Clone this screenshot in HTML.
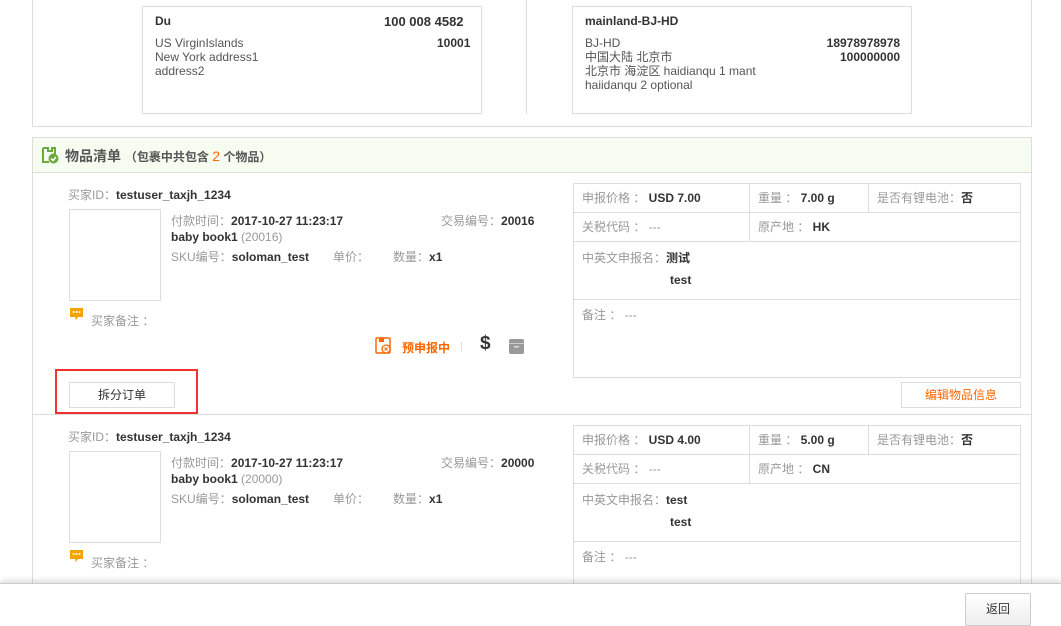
<!DOCTYPE html>
<html><head><meta charset="utf-8">
<style>
*{margin:0;padding:0;box-sizing:border-box}
html,body{width:1061px;height:626px;overflow:hidden}
body{background:#fff;font-family:"Liberation Sans","Noto Sans CJK SC",sans-serif;font-size:12px;color:#333;position:relative}
.a{position:absolute;white-space:nowrap}
.g{color:#999}
.b{font-weight:bold;color:#333}
.box{position:absolute;border:1px solid #ddd}
.cell{position:absolute;border:1px solid #ddd;padding-left:8px;color:#999}
</style></head><body>
<div class="box" style="left:32px;top:-2px;width:1000px;height:129px"></div>
<div class="a" style="left:526px;top:0;width:1px;height:114px;background:#ddd"></div>
<div class="box" style="left:142px;top:6px;width:340px;height:108px"></div>
<div class="a b" style="left:155px;top:14px">Du</div>
<div class="a b" style="left:384px;top:14px;font-size:13px">100 008 4582</div>
<div class="a" style="left:155px;top:36px;color:#555;line-height:14px">US VirginIslands<br>New York address1<br>address2</div>
<div class="a b" style="left:437px;top:36px">10001</div>
<div class="box" style="left:572px;top:6px;width:340px;height:108px"></div>
<div class="a b" style="left:585px;top:14px">mainland-BJ-HD</div>
<div class="a" style="left:585px;top:36px;color:#555;line-height:14px">BJ-HD<br>中国大陆 北京市<br>北京市 海淀区 haidianqu 1 mant<br>haiidanqu 2 optional</div>
<div class="a b" style="left:826px;top:36px;text-align:right;line-height:14px">18978978978<br><span style="padding-left:14px">100000000</span></div>

<div class="box" style="left:32px;top:137px;width:1000px;height:470px"></div>
<div class="a" style="left:33px;top:138px;width:998px;height:35px;background:#f7fcf1;border-bottom:1px solid #ddd"></div>
<svg class="a" style="left:41px;top:146px" width="18" height="18" viewBox="0 0 18 18"><path d="M2 2h5v3h4V2h3v6" fill="none" stroke="#6aaa3a" stroke-width="2"/><path d="M2 2v14h6" fill="none" stroke="#6aaa3a" stroke-width="2"/><circle cx="12.5" cy="12.5" r="5" fill="#6aaa3a"/><path d="M10 12.5l2 2 3-3.5" fill="none" stroke="#fff" stroke-width="1.5"/></svg>
<div class="a" style="left:65px;top:146px;font-size:14px;font-weight:bold;color:#555">物品清单 <span style="font-size:12px">（包裹中共包含 <span style="color:#f60;font-weight:normal;font-size:14px">2</span> 个物品）</span></div>
<div class="a" style="left:33px;top:414px;width:998px;height:1px;background:#ddd"></div>

<div class="a g" style="left:68px;top:186px">买家ID：<span class="b">testuser_taxjh_1234</span></div>
<div class="box" style="left:69px;top:209px;width:92px;height:92px"></div>
<div class="a g" style="left:171px;top:212px">付款时间：<span class="b">2017-10-27 11:23:17</span></div>
<div class="a g" style="left:441px;top:212px">交易编号：<span class="b">20016</span></div>
<div class="a" style="left:171px;top:230px"><span class="b">baby book1</span> <span class="g">(20016)</span></div>
<div class="a g" style="left:171px;top:248px">SKU编号：<span class="b">soloman_test</span></div>
<div class="a g" style="left:333px;top:248px">单价：</div>
<div class="a g" style="left:393px;top:248px">数量：<span class="b">x1</span></div>
<svg class="a" style="left:69px;top:307px" width="16" height="16" viewBox="0 0 16 16"><path d="M1 1h13v9H9l-2 3-1-3H1z" fill="#f5a300"/><circle cx="4.5" cy="5" r="1" fill="#fff"/><circle cx="7.5" cy="5" r="1" fill="#fff"/><circle cx="10.5" cy="5" r="1" fill="#fff"/></svg>
<div class="a g" style="left:91px;top:312px">买家备注 ：</div>
<svg class="a" style="left:375px;top:337px" width="17" height="18" viewBox="0 0 17 18"><rect x="1" y="1" width="14" height="15" rx="1" fill="none" stroke="#f60" stroke-width="1.5"/><rect x="4" y="1" width="5" height="4" fill="#f60"/><circle cx="11" cy="12" r="4" fill="#fff" stroke="#f60" stroke-width="1.3"/><path d="M9.5 10.5l3 3M12.5 10.5l-3 3" stroke="#f60"/></svg>
<div class="a" style="left:402px;top:339px;color:#f60;font-weight:bold">预申报中</div>
<div class="a" style="left:461px;top:342px;width:1px;height:9px;background:#ddd"></div>
<div class="a" style="left:480px;top:333px;font-size:19px;font-weight:bold;color:#333">$</div>
<svg class="a" style="left:509px;top:339px" width="16" height="15" viewBox="0 0 16 15"><rect x="0" y="0" width="15" height="15" rx="2" fill="#999"/><rect x="0" y="4" width="15" height="1" fill="#ccc"/><rect x="5" y="7" width="5" height="1.5" fill="#ddd"/></svg>
<div class="a" style="left:55px;top:369px;width:143px;height:45px;border:2px solid #f03232"></div>
<div class="box" style="left:69px;top:382px;width:106px;height:26px;text-align:center;line-height:24px;color:#333">拆分订单</div>

<div class="cell" style="left:573px;top:183px;width:177px;height:30px;line-height:28px">申报价格 ： <span class="b">USD 7.00</span></div>
<div class="cell" style="left:749px;top:183px;width:120px;height:30px;line-height:28px">重量 ： <span class="b">7.00 g</span></div>
<div class="cell" style="left:868px;top:183px;width:153px;height:30px;line-height:28px">是否有锂电池：<span class="b">否</span></div>
<div class="cell" style="left:573px;top:212px;width:177px;height:30px;line-height:28px">关税代码 ： ---</div>
<div class="cell" style="left:749px;top:212px;width:272px;height:30px;line-height:28px">原产地 ： <span class="b">HK</span></div>
<div class="cell" style="left:573px;top:241px;width:448px;height:59px;padding-top:5px;line-height:22px">中英文申报名：<span class="b">测试</span><br><span class="b" style="padding-left:88px">test</span></div>
<div class="cell" style="left:573px;top:299px;width:448px;height:79px;padding-top:6px">备注 ： ---</div>
<div class="box" style="left:901px;top:382px;width:120px;height:26px;text-align:center;line-height:24px;color:#f60">编辑物品信息</div>

<div class="a g" style="left:68px;top:428px">买家ID：<span class="b">testuser_taxjh_1234</span></div>
<div class="box" style="left:69px;top:451px;width:92px;height:92px"></div>
<div class="a g" style="left:171px;top:454px">付款时间：<span class="b">2017-10-27 11:23:17</span></div>
<div class="a g" style="left:441px;top:454px">交易编号：<span class="b">20000</span></div>
<div class="a" style="left:171px;top:472px"><span class="b">baby book1</span> <span class="g">(20000)</span></div>
<div class="a g" style="left:171px;top:490px">SKU编号：<span class="b">soloman_test</span></div>
<div class="a g" style="left:333px;top:490px">单价：</div>
<div class="a g" style="left:393px;top:490px">数量：<span class="b">x1</span></div>
<svg class="a" style="left:69px;top:549px" width="16" height="16" viewBox="0 0 16 16"><path d="M1 1h13v9H9l-2 3-1-3H1z" fill="#f5a300"/><circle cx="4.5" cy="5" r="1" fill="#fff"/><circle cx="7.5" cy="5" r="1" fill="#fff"/><circle cx="10.5" cy="5" r="1" fill="#fff"/></svg>
<div class="a g" style="left:91px;top:554px">买家备注 ：</div>

<div class="cell" style="left:573px;top:425px;width:177px;height:30px;line-height:28px">申报价格 ： <span class="b">USD 4.00</span></div>
<div class="cell" style="left:749px;top:425px;width:120px;height:30px;line-height:28px">重量 ： <span class="b">5.00 g</span></div>
<div class="cell" style="left:868px;top:425px;width:153px;height:30px;line-height:28px">是否有锂电池：<span class="b">否</span></div>
<div class="cell" style="left:573px;top:454px;width:177px;height:30px;line-height:28px">关税代码 ： ---</div>
<div class="cell" style="left:749px;top:454px;width:272px;height:30px;line-height:28px">原产地 ： <span class="b">CN</span></div>
<div class="cell" style="left:573px;top:483px;width:448px;height:59px;padding-top:5px;line-height:22px">中英文申报名：<span class="b">test</span><br><span class="b" style="padding-left:88px">test</span></div>
<div class="cell" style="left:573px;top:541px;width:448px;height:79px;padding-top:6px">备注 ： ---</div>

<div class="a" style="left:0;top:583px;width:1061px;height:43px;background:#fff;border-top:1px solid #ccc;box-shadow:0 -3px 5px rgba(0,0,0,0.12)"></div>
<div class="a" style="left:965px;top:593px;width:66px;height:33px;border:1px solid #ccc;border-radius:2px;background:linear-gradient(#fff,#eee);text-align:center;line-height:31px;color:#333">返回</div>
</body></html>
